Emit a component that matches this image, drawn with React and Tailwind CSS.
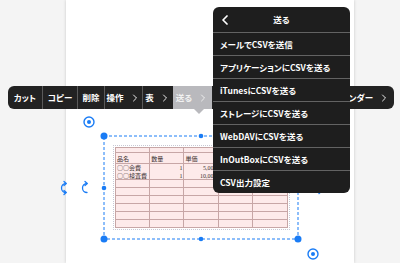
import { ChevronLeft, ChevronRight } from 'lucide-react';

const jp = {
  fontFamily: '"Noto Sans CJK JP", "Noto Sans", sans-serif',
  fontFeatureSettings: '"palt"',
};

const menuItems = [
  'メールでCSVを送信',
  'アプリケーションにCSVを送る',
  'iTunesにCSVを送る',
  'ストレージにCSVを送る',
  'WebDAVにCSVを送る',
  'InOutBoxにCSVを送る',
  'CSV出力設定',
];

function Chevron() {
  return <ChevronRight size={12} strokeWidth={1.8} className="ml-[5px]" />;
}

function Toolbar() {
  return (
    <div className="absolute left-[8px] top-[86px] flex h-[23px] w-[386px] rounded-[6px] bg-[#222222] text-[8.5px] font-bold text-white" style={jp}>
      <div className="flex w-[34px] items-center justify-center">カット</div>
      <div className="flex w-[35px] items-center justify-center border-l border-[#5a5a5a]">コピー</div>
      <div className="flex w-[27px] items-center justify-center border-l border-[#5a5a5a]">削除</div>
      <div className="flex w-[38px] items-center justify-center border-l border-[#5a5a5a]">操作<Chevron /></div>
      <div className="flex w-[31px] items-center justify-center border-l border-[#5a5a5a]">表<Chevron /></div>
      <div className="relative flex w-[39px] items-center justify-center bg-[#b9b9bd] text-[#f2f2f2]">
        送る<Chevron />
        <div className="absolute left-[21px] top-[23px] h-0 w-0 border-x-[5px] border-t-[5px] border-x-transparent border-t-[#b9b9bd]" />
      </div>
      <div className="flex flex-1 items-center justify-end overflow-hidden whitespace-nowrap pr-[4px]">
        カレンダー<Chevron />
      </div>
    </div>
  );
}

function SendMenu() {
  return (
    <div className="absolute left-[213px] top-[7px] w-[137px] overflow-hidden rounded-[6px] bg-[#1e1e1e] text-white" style={jp}>
      <div className="relative flex h-[25px] items-center justify-center text-[8.5px] font-semibold">
        <ChevronLeft size={16} strokeWidth={2.6} className="absolute left-[4px]" />
        送る
      </div>
      {menuItems.map((t) => (
        <div key={t} className="flex h-[23px] items-center whitespace-nowrap border-t border-[#636363] pl-[7px] text-[8.5px] font-semibold">
          {t}
        </div>
      ))}
    </div>
  );
}

// names in a CJK face so the ○ marks are full width, figures in a serif
const cjk = { fontFamily: '"Noto Sans CJK JP", serif' };
const serif = { fontFamily: '"Liberation Serif", serif' };

function Cell({ children, right, last, num }) {
  return (
    <div
      className={`flex items-center overflow-hidden whitespace-nowrap px-[1px] leading-none ${right ? 'justify-end' : ''} ${last ? '' : 'border-r border-[#c7a6a6]'}`}
      style={num ? serif : cjk}
    >
      {children}
    </div>
  );
}

function TableImage() {
  const empty = [0, 1, 2, 3, 4, 5];
  return (
    <div className="absolute left-[113px] top-[145px] h-[85px] w-[177px] border border-dotted border-[#c8c8d4] bg-white p-[1px] text-[6px] text-[#3a3030]">
      <div className="flex h-full flex-col border border-[#c7a6a6] bg-[#fdeaea]">
        <div className="grid h-[5px] grid-cols-5 border-b border-[#c7a6a6]">
          <Cell /><Cell /><Cell /><Cell /><Cell last />
        </div>
        <div className="grid h-[11px] grid-cols-5 items-stretch border-b border-[#c7a6a6] [&>div]:items-end [&>div]:pb-[1px]">
          <Cell>品名</Cell><Cell>数量</Cell><Cell>単価</Cell><Cell /><Cell last />
        </div>
        <div className="grid h-[8px] grid-cols-5">
          <Cell>○○会費</Cell><Cell right num>1</Cell><Cell right num>5,000</Cell><Cell /><Cell last />
        </div>
        <div className="grid h-[8px] grid-cols-5 border-b border-[#c7a6a6]">
          <Cell>○○検査費</Cell><Cell right num>1</Cell><Cell right num>10,000</Cell><Cell /><Cell last />
        </div>
        {empty.map((i) => (
          <div key={i} className="grid flex-1 grid-cols-5 border-b border-[#c7a6a6] last:border-b-0">
            <Cell /><Cell /><Cell /><Cell /><Cell last />
          </div>
        ))}
      </div>
    </div>
  );
}

function RotateIcon({ x, y, both }) {
  return (
    <g transform={`translate(${x} ${y})`} fill="none" stroke="#1a7cf5" strokeWidth="1.3" strokeLinecap="round" strokeLinejoin="round">
      <path d="M3 -4.5 A4.5 4.5 0 1 0 3 4.5" />
      <path d="M1 -6.5 L3.2 -4.5 L1 -2.5" />
      {both && <path d="M1 2.5 L3.2 4.5 L1 6.5" />}
    </g>
  );
}

function SelectionChrome() {
  const blue = '#1a7cf5';
  return (
    <svg className="absolute left-0 top-0" width="400" height="263">
      <rect x="104" y="136" width="194" height="103" fill="none" stroke={blue} strokeWidth="1" strokeDasharray="3 2" />
      <circle cx="89" cy="122" r="5" fill="none" stroke={blue} strokeWidth="1.4" />
      <circle cx="89" cy="122" r="2" fill={blue} />
      <circle cx="313" cy="254" r="5" fill="none" stroke={blue} strokeWidth="1.4" />
      <circle cx="313" cy="254" r="2" fill={blue} />
      <circle cx="104" cy="136" r="3.5" fill={blue} />
      <circle cx="298" cy="136" r="3.5" fill={blue} />
      <circle cx="104" cy="239" r="3.5" fill={blue} />
      <circle cx="298" cy="239" r="3.5" fill={blue} />
      <circle cx="201" cy="136" r="2.3" fill={blue} />
      <circle cx="201" cy="239" r="2.3" fill={blue} />
      <circle cx="104" cy="188" r="2.3" fill={blue} />
      <circle cx="298" cy="188" r="2.3" fill={blue} />
      <RotateIcon x={63} y={188} both />
      <RotateIcon x={84} y={188} />
      <RotateIcon x={318} y={187} both />
      <RotateIcon x={339} y={187} />
    </svg>
  );
}

export default function App() {
  return (
    <div className="relative h-[263px] w-[400px] overflow-hidden bg-[#f4f4f4]">
      <div className="flex h-full">
        <div className="w-[66px]" />
        <div className="h-full w-[288px] bg-white shadow-[0_0_3px_rgba(0,0,0,0.18)]" />
      </div>
      <TableImage />
      <SelectionChrome />
      <Toolbar />
      <SendMenu />
    </div>
  );
}
